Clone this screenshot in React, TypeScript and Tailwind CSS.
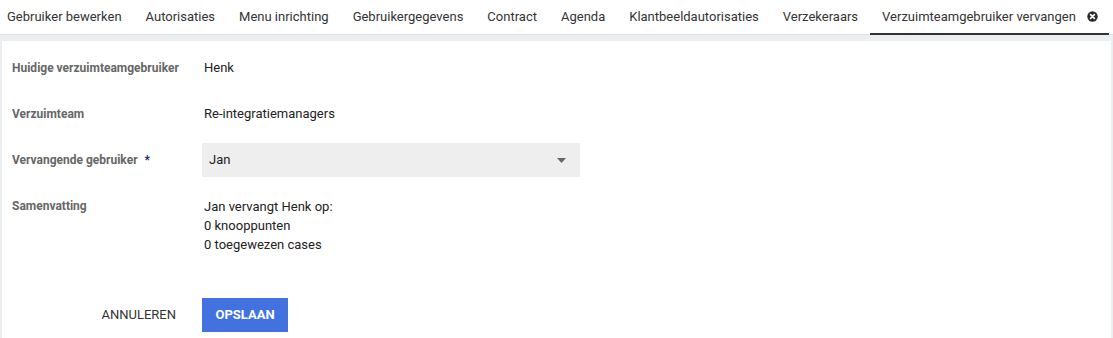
import React from "react";

const tabs = [
  "Gebruiker bewerken",
  "Autorisaties",
  "Menu inrichting",
  "Gebruikergegevens",
  "Contract",
  "Agenda",
  "Klantbeeldautorisaties",
  "Verzekeraars",
];

function CloseIcon() {
  return (
    <svg width="11" height="11" viewBox="0 0 11 11">
      <circle cx="5.5" cy="5.5" r="5.2" fill="#2b2b2b" />
      <path d="M3.6 3.6 L7.4 7.4 M7.4 3.6 L3.6 7.4" stroke="#fff" strokeWidth="1.6" strokeLinecap="round" />
    </svg>
  );
}

function Row({ label, children, required }: { label: string; children: React.ReactNode; required?: boolean }) {
  return (
    <div className="flex h-[46px] items-center">
      <div className="w-[190px] text-[12px] font-bold text-[#666666]">
        {label}
        {required && <span className="ml-[7px] text-[#1a2a6c]">*</span>}
      </div>
      <div className="flex-1 text-[13px] text-[#222222]">{children}</div>
    </div>
  );
}

export default function App() {
  return (
    <div className="w-[1113px] h-[338px] bg-white" style={{ fontFamily: "Roboto, 'Liberation Sans', sans-serif" }}>
      {/* Tabs */}
      <div className="flex h-[35px] border-b border-[#dde1e6] text-[13px] text-[#333333]">
        {tabs.map((t, i) => (
          <div key={t} className={`flex items-center h-full pb-[1px] ${i === 0 ? "pl-[7px] pr-3" : "px-3"}`}>
            {t}
          </div>
        ))}
        <div className="flex items-center h-[35px] pl-3 pr-[11px] border-b-2 border-[#333333] gap-[11px]">
          <span>Verzuimteamgebruiker vervangen</span>
          <CloseIcon />
        </div>
      </div>

      {/* Content */}
      <div className="bg-[#eceff2] pt-[6px] px-[2px] h-[303px]">
        <div className="bg-white h-full pl-[10px] pt-[4px]">
          <Row label="Huidige verzuimteamgebruiker">
            <span className="pl-[2px]">Henk</span>
          </Row>
          <Row label="Verzuimteam">
            <span className="pl-[2px]">Re-integratiemanagers</span>
          </Row>
          <Row label="Vervangende gebruiker" required>
            <div className="w-[378px] h-[34px] bg-[#eeeeee] flex items-center justify-between pl-[7px] pr-[14px]">
              <span>Jan</span>
              <svg width="9" height="5" viewBox="0 0 9 5">
                <path d="M0 0 L9 0 L4.5 5 Z" fill="#666666" />
              </svg>
            </div>
          </Row>
          <div className="flex pt-[14px]">
            <div className="w-[190px] text-[12px] font-bold text-[#666666] leading-[19px]">Samenvatting</div>
            <div className="pl-[2px] text-[13px] text-[#222222] leading-[19px]">
              <div>Jan vervangt Henk op:</div>
              <div>0 knooppunten</div>
              <div>0 toegewezen cases</div>
            </div>
          </div>
          <div className="flex items-center mt-[44px] h-[34px]">
            <div className="w-[190px] flex justify-end pr-[26px]">
              <button className="text-[13px] text-[#333333] uppercase">Annuleren</button>
            </div>
            <button className="h-[34px] w-[86px] bg-[#4271e0] text-white text-[13px] font-bold uppercase">Opslaan</button>
          </div>
        </div>
      </div>
    </div>
  );
}
